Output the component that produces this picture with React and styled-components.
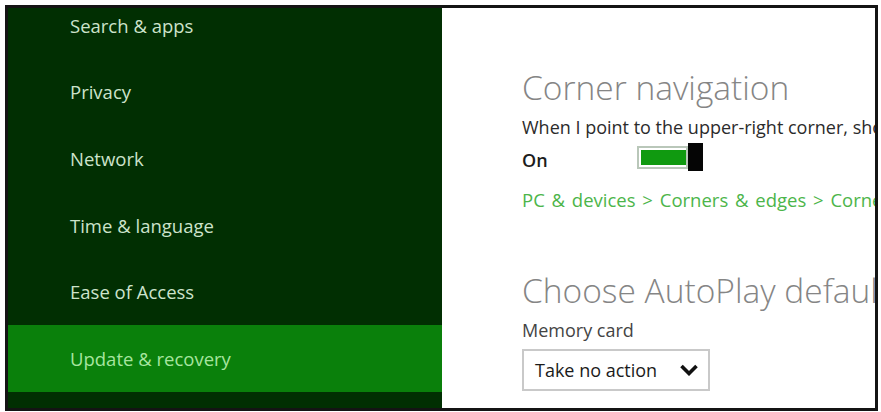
import React from 'react';
import styled, { createGlobalStyle } from 'styled-components';

const GlobalStyle = createGlobalStyle`
  html, body {
    margin: 0;
    padding: 0;
    background: #fff;
  }
  body {
    font-family: "Open Sans", "Noto Sans", sans-serif;
  }
`;

const menu = [
  'Search & apps',
  'Privacy',
  'Network',
  'Time & language',
  'Ease of Access',
  'Update & recovery',
];

const App = () => {
  const active = 'Update & recovery';
  return (
    <>
      <GlobalStyle />
      <Page>
        <Frame>
          <Sidebar>
            <MenuList>
              {menu.map((item) => (
                <MenuItem key={item} $active={item === active}>{item}</MenuItem>
              ))}
            </MenuList>
          </Sidebar>

          <Content>
            <Heading>Corner navigation</Heading>
            <Description>When I point to the upper-right corner, show the charms</Description>
            <ToggleRow>
              <ToggleLabel>On</ToggleLabel>
              <Toggle>
                <Track><Fill /></Track>
                <Thumb />
              </Toggle>
            </ToggleRow>
            <Crumbs>PC &amp; devices &gt; Corners &amp; edges &gt; Corner navigation</Crumbs>

            <Heading $spaced>Choose AutoPlay defaults</Heading>
            <FieldLabel>Memory card</FieldLabel>
            <Dropdown>
              <span>Take no action</span>
              <svg width="20" height="12" viewBox="0 0 20 12">
                <polyline points="2.5,2 10,9.5 17.5,2" fill="none" stroke="#111" strokeWidth="3.6" strokeLinejoin="miter" />
              </svg>
            </Dropdown>
          </Content>
        </Frame>
      </Page>
    </>
  );
};

const Page = styled.div`
  padding: 5px 3px 1px 5px;
  width: 881px;
  height: 412px;
  box-sizing: border-box;
`;

const Frame = styled.div`
  display: grid;
  grid-template-columns: 434px 1fr;
  height: 100%;
  border: 3px solid #141414;
  box-sizing: border-box;
  overflow: hidden;
`;

const Sidebar = styled.nav`
  background: #012f02;
  overflow: hidden;
`;

const MenuList = styled.ul`
  list-style: none;
  margin: -16px 0 0;
  padding: 0;
`;

const MenuItem = styled.li`
  display: flex;
  align-items: center;
  height: 66.6px;
  padding-left: 62px;
  font-size: 18.5px;
  color: ${(p) => (p.$active ? '#a6e59f' : '#cde3cb')};
  background: ${(p) => (p.$active ? '#0a800b' : 'transparent')};
`;

const Content = styled.main`
  background: #fff;
  padding: 59px 0 0 80px;
  overflow: hidden;
  white-space: nowrap;
`;

const Heading = styled.h2`
  margin: ${(p) => (p.$spaced ? '58px' : '0')} 0 0;
  font-size: 33.5px;
  font-weight: 300;
  line-height: 40px;
  color: #858585;
`;

const Description = styled.div`
  margin-top: 8px;
  font-size: 18px;
  line-height: 24px;
  color: #2b2b2b;
`;

const ToggleRow = styled.div`
  display: flex;
  align-items: center;
  height: 28px;
  margin-top: 4px;
`;

const ToggleLabel = styled.span`
  width: 115px;
  margin-top: 6px;
  font-size: 18px;
  line-height: 1;
  font-weight: 600;
  color: #1c1c1c;
`;

const Toggle = styled.div`
  display: flex;
  align-items: center;
`;

const Track = styled.div`
  width: 51px;
  height: 23px;
  box-sizing: border-box;
  border: 2px solid #b9c7b9;
  padding: 2px 0 2px 2px;
  background: #fff;
`;

const Fill = styled.div`
  height: 100%;
  background: #109a10;
`;

const Thumb = styled.div`
  width: 15px;
  height: 28px;
  background: #050505;
`;

const Crumbs = styled.div`
  margin-top: 17px;
  font-size: 18.5px;
  line-height: 24px;
  word-spacing: 2px;
  color: #4cb54a;
`;

const FieldLabel = styled.div`
  margin-top: 8px;
  font-size: 18px;
  line-height: 24px;
  color: #444;
`;

const Dropdown = styled.div`
  display: flex;
  align-items: center;
  gap: 22px;
  width: 188px;
  height: 42px;
  margin-top: 7px;
  padding-left: 11px;
  box-sizing: border-box;
  border: 2px solid #c9c9c9;
  font-size: 18px;
  color: #1b1b1b;
`;

export default App;
